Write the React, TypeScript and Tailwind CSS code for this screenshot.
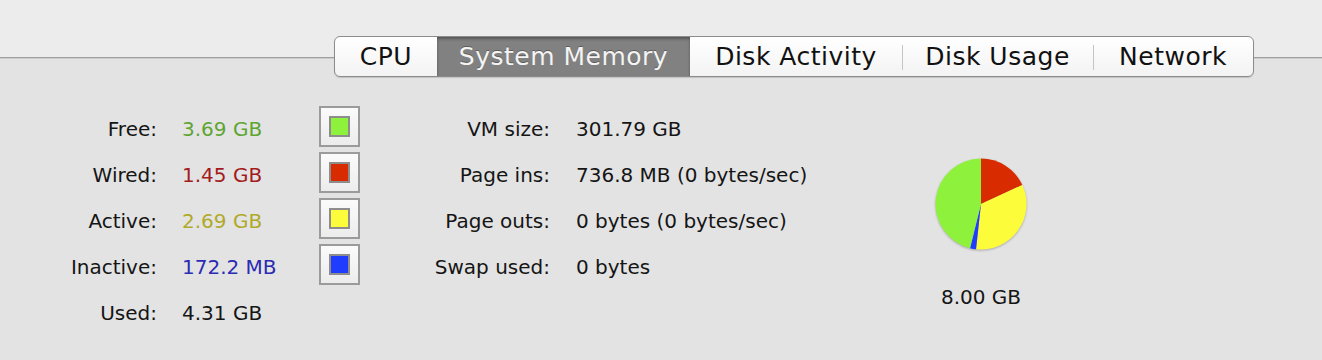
import React from "react";

type Slice = {
  label: string;
  value: string;
  gb: number;
  text: string;
  fill: string;
};

const slices: Slice[] = [
  { label: "Free:", value: "3.69 GB", gb: 3.69, text: "text-[#5fa532]", fill: "#8ef23c" },
  { label: "Wired:", value: "1.45 GB", gb: 1.45, text: "text-[#a31c1c]", fill: "#d92b00" },
  { label: "Active:", value: "2.69 GB", gb: 2.69, text: "text-[#b0aa2a]", fill: "#fcfc3a" },
  { label: "Inactive:", value: "172.2 MB", gb: 0.172, text: "text-[#2b2bb3]", fill: "#1f3dff" },
];

const swatchBg: Record<string, string> = {
  "#8ef23c": "bg-[#8ef23c]",
  "#d92b00": "bg-[#d92b00]",
  "#fcfc3a": "bg-[#fcfc3a]",
  "#1f3dff": "bg-[#1f3dff]",
};

const vmStats = [
  ["VM size:", "301.79 GB"],
  ["Page ins:", "736.8 MB (0 bytes/sec)"],
  ["Page outs:", "0 bytes (0 bytes/sec)"],
  ["Swap used:", "0 bytes"],
];

const tabs = [
  { name: "CPU", w: "w-[102px]" },
  { name: "System Memory", w: "w-[253px]" },
  { name: "Disk Activity", w: "w-[212px]" },
  { name: "Disk Usage", w: "w-[191px]" },
  { name: "Network", w: "w-[160px]" },
];
const active = 1;

function TabBar() {
  return (
    <div className="flex h-[41px] overflow-hidden rounded-[6px] border border-[#8c8c8c] bg-[linear-gradient(#ffffff,#f3f3f3)] shadow-[0_1px_1px_rgba(0,0,0,0.15)]">
      {tabs.map((t, i) => {
        const sel = i === active;
        const divider = i > 0 && !sel && i - 1 !== active;
        return (
          <div key={t.name} className={`relative flex items-center justify-center ${t.w} ${sel ? "bg-[#818181] text-[#f4f4f4] shadow-[inset_0_2px_3px_rgba(0,0,0,0.35)] [text-shadow:0_-1px_0_rgba(0,0,0,0.3)]" : "text-[#111]"}`}>
            {divider && <span className="absolute left-0 top-[8px] bottom-[6px] w-px bg-[#c4c4c4]" />}
            {t.name}
          </div>
        );
      })}
    </div>
  );
}

function Pie() {
  const total = slices.reduce((s, x) => s + x.gb, 0);
  // drawn clockwise from 12 o'clock: wired, active, inactive, free
  const order = [1, 2, 3, 0];
  const r = 45.5;
  const c = 48;
  let a = 0;
  const pt = (ang: number) => [c + r * Math.sin(ang), c - r * Math.cos(ang)];
  return (
    <svg width="96" height="96" viewBox="0 0 96 96" className="drop-shadow-[0_1px_1px_rgba(0,0,0,0.25)]">
      {order.map((idx) => {
        const s = slices[idx];
        const sweep = (s.gb / total) * Math.PI * 2;
        const [x1, y1] = pt(a);
        const [x2, y2] = pt(a + sweep);
        const large = sweep > Math.PI ? 1 : 0;
        a += sweep;
        return (
          <path key={s.label} d={`M${c} ${c} L${x1} ${y1} A${r} ${r} 0 ${large} 1 ${x2} ${y2} Z`} fill={s.fill} />
        );
      })}
    </svg>
  );
}

export default function App() {
  return (
    <div className="h-[360px] w-[1322px] bg-[#e3e3e3] font-['DejaVu_Sans',sans-serif] text-[#151515]">
      <div className="flex items-center pt-[36px] text-[25px] tracking-[0.5px] bg-[linear-gradient(#ececec_0,#ececec_57px,#9f9f9f_57px,#9f9f9f_58px,#cdcdcd_58px,#cdcdcd_59px,#e3e3e3_59px)]">
        <div className="w-[334px]" />
        <TabBar />
      </div>

      <div className="flex pt-[29px] text-[20px]">
        <div className="flex flex-col">
          {slices.map((s) => (
            <div key={s.label} className="flex h-[46px] items-center">
              <span className="w-[157px] text-right">{s.label}</span>
              <span className={`ml-[25px] w-[137px] ${s.text}`}>{s.value}</span>
              <div className="mb-[5px] flex h-[41px] w-[41px] items-center justify-center border-2 border-[#9b9b9b] bg-[linear-gradient(#fbfbfb,#ececec)]">
                <div className={`h-[21px] w-[21px] border-2 border-[#8d8d8d] ${swatchBg[s.fill]}`} />
              </div>
            </div>
          ))}
          <div className="flex h-[46px] items-center">
            <span className="w-[157px] text-right">Used:</span>
            <span className="ml-[25px]">4.31 GB</span>
          </div>
        </div>

        <div className="flex flex-col">
          {vmStats.map(([k, v]) => (
            <div key={k} className="flex h-[46px] items-center">
              <span className="w-[190px] text-right">{k}</span>
              <span className="ml-[26px] w-[345px]">{v}</span>
            </div>
          ))}
        </div>

        <div className="flex w-[120px] flex-col items-center pt-[50px]">
          <Pie />
          <span className="mt-[30px]">8.00 GB</span>
        </div>
      </div>
    </div>
  );
}
